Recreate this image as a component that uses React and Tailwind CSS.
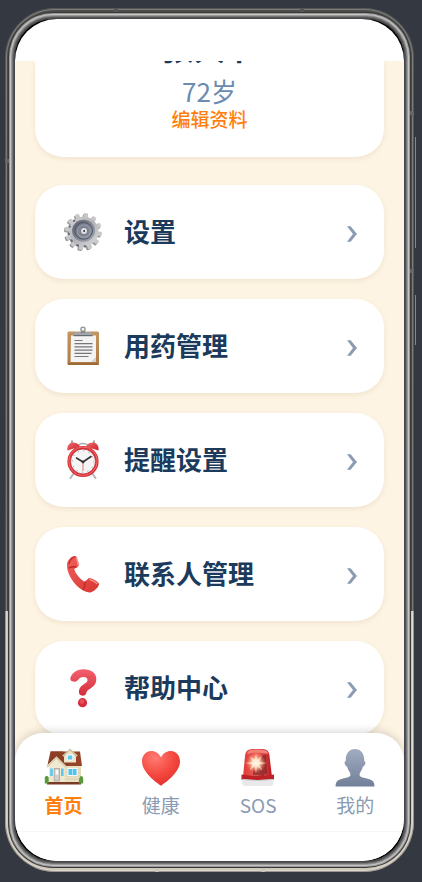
function GearIcon() {
  const teeth = Array.from({ length: 12 }, (_, i) => i * 30 + 8);
  return (
    <svg viewBox="0 0 40 40" className="size-10" aria-hidden="true">
      <defs>
        <linearGradient id="gearRim" x1="0" y1="0" x2="1" y2="1">
          <stop offset="0" stopColor="#d2d2d4" />
          <stop offset="0.5" stopColor="#b4b4b8" />
          <stop offset="1" stopColor="#dcdcde" />
        </linearGradient>
        <linearGradient id="gearCore" x1="0" y1="0" x2="1" y2="1">
          <stop offset="0" stopColor="#5c6270" />
          <stop offset="1" stopColor="#a4a9b6" />
        </linearGradient>
      </defs>
      <g transform="translate(-0.6 0.6)">
        {teeth.map((a) => (
          <rect key={a} x="18" y="1.6" width="4.6" height="8" rx="1" fill="#96969d" transform={`rotate(${a} 20 20)`} />
        ))}
        <circle cx="20" cy="20" r="14.6" fill="#85858d" />
      </g>
      <g fill="url(#gearRim)">
        {teeth.map((a) => (
          <rect key={a} x="18.4" y="1" width="4.4" height="7" rx="1.1" fill="#c8c8cb" transform={`rotate(${a} 20.5 19.5)`} />
        ))}
        <circle cx="20.7" cy="19.6" r="14.8" />
      </g>
      {teeth.slice(5, 11).map((a) => (
        <circle key={a} cx="20" cy="5.6" r="1.2" fill="#696b74" transform={`rotate(${a + 14} 20 20)`} />
      ))}
      <ellipse cx="20.600" cy="18.800" rx="11.500" ry="11" fill="url(#gearCore)" />
      <ellipse cx="20.600" cy="18.800" rx="8.800" ry="8.400" fill="none" stroke="#4b5160" strokeWidth="1" />
      <ellipse cx="20.800" cy="19" rx="6.400" ry="6.200" fill="#7f8593" stroke="#a8adb9" strokeWidth="0.6" />
      <circle cx="21" cy="19" r="3.6" fill="#e0e0e2" stroke="#596070" strokeWidth="0.7" />
      <circle cx="21.1" cy="19" r="1" fill="#30343c" />
    </svg>
  );
}

function ClipboardIcon() {
  return (
    <svg viewBox="0 0 40 40" className="size-10" aria-hidden="true">
      <defs>
        <linearGradient id="board" x1="0" y1="0" x2="0" y2="1">
          <stop offset="0" stopColor="#c4955f" />
          <stop offset="1" stopColor="#b07a42" />
        </linearGradient>
      </defs>
      <rect x="4.5" y="5.5" width="31.5" height="33.5" rx="1.5" fill="url(#board)" />
      <path d="M4.8 38h31" stroke="#916030" strokeWidth="1.2" />
      <path d="M8 9.5h25v26.500H7.500z" fill="#f3f3f4" />
      <path d="M28 36l5-5v5z" fill="#d2d2d5" />
      <path d="M11.500 14.500h8M11.500 17.700h18M11.500 20.900h18M11.500 24.100h18M11.500 27.300h17M11.500 30.500h14" stroke="#77777b" strokeWidth="1.200" />
      <path d="M10.500 8.500l1.500-2.500h16l1.500 2.500v1.200h-19z" fill="#a3a5aa" />
      <path d="M10.500 9.700h19" stroke="#5b5d62" strokeWidth="1" />
      <path d="M17.500 7l1-3h3l1 3z" fill="#85878d" />
      <circle cx="20" cy="3.300" r="2.100" fill="#f3f3f3" stroke="#8d9095" strokeWidth="1.300" />
    </svg>
  );
}

function AlarmIcon() {
  return (
    <svg viewBox="0 0 40 40" className="size-10" aria-hidden="true">
      <defs>
        <linearGradient id="bell" x1="0" y1="0" x2="1" y2="1">
          <stop offset="0" stopColor="#f26a6d" />
          <stop offset="1" stopColor="#c92129" />
        </linearGradient>
      </defs>
      <path d="M11 33l-3.500 5M29 33l3.500 5" stroke="#b4b5b8" strokeWidth="2" strokeLinecap="round" />
      <path d="M9 3.500V1.200M31 3.500V1.200M12 8l4 4M28 8l-4 4" stroke="#a5a6a8" strokeWidth="2" strokeLinecap="round" />
      <path d="M15 5q5-3 10 0" fill="none" stroke="#aaa" strokeWidth="1.400" />
      <path d="M4.500 10.500C3.500 5 8 1 13 3c2 .8 3.300 2 4 3.500z" fill="url(#bell)" />
      <path d="M35.500 10.500C36.500 5 32 1 27 3c-2 .8-3.300 2-4 3.500z" fill="url(#bell)" />
      <circle cx="20" cy="21.500" r="15.600" fill="#d93036" />
      <circle cx="20" cy="21.200" r="14.200" fill="none" stroke="#f07175" strokeWidth="0.900" />
      <circle cx="20" cy="21.500" r="12.500" fill="#f5f5f5" stroke="#b92028" strokeWidth="0.700" />
      <circle cx="20" cy="21.500" r="10.700" fill="none" stroke="#777" strokeWidth="1" strokeDasharray="0.8 4.800" />
      <path d="M20 22v9" stroke="#e36a5e" strokeWidth="0.900" />
      <path d="M13.500 18l6.500 4 8-5.500" fill="none" stroke="#343434" strokeWidth="1.600" strokeLinecap="round" />
      <circle cx="20" cy="22" r="1.400" fill="#343434" />
    </svg>
  );
}

function PhoneIcon() {
  return (
    <svg viewBox="0 0 40 40" className="size-10" aria-hidden="true">
      <defs>
        <linearGradient id="handset" x1="0" y1="0" x2="1" y2="1">
          <stop offset="0" stopColor="#f0605c" />
          <stop offset="1" stopColor="#d8342f" />
        </linearGradient>
      </defs>
      <path d="M6 5.500C8 2.500 11 1.500 13 2.200c1.200 1.200 2.800 6.500 2.800 9.300-.4 1.700-3.600 2.300-4.600 3.600 1.600 5.200 5.200 9.500 9.800 12.400 2 .3 3.400-3 5.200-3.500 2.800 0 8.300 3.400 9.800 5.600.6 2.600-4.800 8.700-9.500 9C14 37 3 20 4 10c.3-1.800.9-3.300 2-4.500z" fill="url(#handset)" />
      <path d="M6 9.500c.5-2.500 2-5 5.500-6.500M13 13c-2.500-.5-5-.2-7 1M22 28.500c.3 2.500-.3 4.800-1.800 6.800" fill="none" stroke="#bd2825" strokeWidth="1.300" strokeLinecap="round" />
      <path d="M13.500 4.500c.9 2 1.400 4 1.300 6.300M27 25.500c2.500.8 5 2.300 7 4" fill="none" stroke="#fb928d" strokeWidth="1.400" strokeLinecap="round" />
    </svg>
  );
}

function QuestionIcon() {
  return (
    <svg viewBox="0 0 40 40" className="size-10" aria-hidden="true">
      <defs>
        <linearGradient id="mark" x1="0" y1="0" x2="0" y2="1">
          <stop offset="0" stopColor="#f4606d" />
          <stop offset="1" stopColor="#d42e3c" />
        </linearGradient>
      </defs>
      <path d="M7.500 9.500C9.500 4.500 14 1.300 20.500 1.300c7.500 0 12.800 3.700 12.800 9.600 0 5.600-3.700 8.200-7 10.300-2.400 1.500-2.700 2.500-3.200 4.300-.5 1.600-1.800 2.200-3.500 2.200-2.300 0-3.700-1.300-3.700-3.600 0-4 2.300-6.300 5.300-8.200 2-1.300 3.300-2.200 3.300-4 0-1.900-1.600-3-4-3-2.800 0-4.100 1.300-5.300 2.900-1.100 1.400-2.200 2-4 1.900-2.800-.1-4.600-2-3.700-4.200z" fill="url(#mark)" />
      <circle cx="19.500" cy="34.700" r="4.600" fill="#d52f3d" />
      <circle cx="19" cy="33.500" r="2.400" fill="#e5505b" />
    </svg>
  );
}

function HouseIcon() {
  return (
    <svg viewBox="0 0 40 40" className="size-10" aria-hidden="true">
      <path d="M5 18h32v18H5z" fill="#e9e0c2" />
      <path d="M6.500 4.500H36L38 19H18z" fill="#94452a" />
      <path d="M6.500 4.500L3.500 18 12.500 10l9.500 9h4L19 4.500z" fill="#8c3f25" />
      <path d="M20 9l6-6 6 6v6.500H20z" fill="#ece3c8" />
      <path d="M18.800 9.200L26 2.500l7.200 6.700" fill="none" stroke="#cfc6a8" strokeWidth="1.600" />
      <rect x="23.200" y="8" width="5.600" height="5" fill="#5cc8ef" stroke="#fff" strokeWidth="0.900" />
      <path d="M5 19l7.500-7.500L20.500 19v17H5z" fill="#f0e8cf" />
      <path d="M3 20l9.500-9.500L22 20" fill="none" stroke="#d8cfb3" strokeWidth="1.800" />
      <path d="M22 23h15M22 26h15M22 29h15M22 32h15" stroke="#cfc5a6" strokeWidth="0.600" />
      <rect x="6.200" y="21.500" width="2.600" height="7.500" fill="#5cc8ef" />
      <rect x="17" y="21.500" width="2.600" height="7.500" fill="#5cc8ef" />
      <rect x="10.200" y="21.500" width="5.400" height="12.500" fill="#d3d0cc" stroke="#a39d94" strokeWidth="0.700" />
      <rect x="11.600" y="23" width="2.600" height="4.500" fill="#fafaf8" />
      <rect x="24" y="21.500" width="9" height="7" fill="#4fc2ee" stroke="#fff" strokeWidth="0.900" />
      <path d="M28.500 21.500v7" stroke="#c5edf9" strokeWidth="0.800" />
      <path d="M3 35h34v2.500H3z" fill="#7a3b25" />
      <path d="M.8 36.500v-6q1.900-3.500 3.900 0v6z" fill="#579b3b" />
      <path d="M35 36.500q-.5-5 1.200-7 2-1.500 3 1.500v5.500z" fill="#579b3b" />
    </svg>
  );
}

function HeartIcon() {
  return (
    <svg viewBox="0 0 40 40" className="size-10" aria-hidden="true">
      <defs>
        <radialGradient id="heart" cx="0.35" cy="0.2" r="0.9">
          <stop offset="0" stopColor="#ff7b72" />
          <stop offset="0.55" stopColor="#f4473f" />
          <stop offset="1" stopColor="#dd2f2b" />
        </radialGradient>
      </defs>
      <path d="M20 38.700C14.500 35 1 25 1 14.500 1 8.500 5 4 10.200 4c4.300 0 7.800 2.400 9.800 6.300C22 6.400 25.500 4 29.800 4 35 4 39 8.500 39 14.500c0 10.500-13.500 20.500-19 24.200z" fill="url(#heart)" />
    </svg>
  );
}

function SirenIcon() {
  return (
    <svg viewBox="0 0 40 40" className="size-10" aria-hidden="true">
      <defs>
        <linearGradient id="dome" x1="0" y1="0" x2="1" y2="0">
          <stop offset="0" stopColor="#dc3b39" />
          <stop offset="0.5" stopColor="#ef6259" />
          <stop offset="1" stopColor="#b9171d" />
        </linearGradient>
        <radialGradient id="flare">
          <stop offset="0" stopColor="#fff" />
          <stop offset="0.4" stopColor="#ffe0ba" stopOpacity="0.900" />
          <stop offset="1" stopColor="#ff8466" stopOpacity="0" />
        </radialGradient>
      </defs>
      <path d="M5 30L7 9Q7.500 2 14 2h11q6 0 6.500 7L34 30z" fill="url(#dome)" />
      <path d="M14 3h11.500q4 .2 4.700 4-10.700-3-21 0Q10 3.200 14 3z" fill="#f08279" />
      <path d="M15 28V20l10-12h3l1 19h-3v2z" fill="#80272a" opacity="0.700" />
      <circle cx="18" cy="16" r="10" fill="url(#flare)" />
      <path d="M18 6l1 7.500 5-4.500-3.200 6 8.200 1-8.200 1.500 3.700 6-5.500-4.500-1 7.500-1.200-7.500-5.300 4.500 3.500-6-8-1.500 8-1-3.500-6 5.300 4.500z" fill="#fff3dc" opacity="0.700" />
      <path d="M3.500 27.500q16 3 32.500 0V33H3.500z" fill="#bd2227" />
      <path d="M4 32q16 2 31.500 0v5q-1 2-3.500 2H7.500Q5 39 4 37z" fill="#e8e9eb" />
      <path d="M4 32.500q16 2 31.500 0" fill="none" stroke="#c6c8cc" strokeWidth="0.900" />
    </svg>
  );
}

function PersonIcon() {
  return (
    <svg viewBox="0 0 40 40" className="size-10" aria-hidden="true">
      <defs>
        <linearGradient id="person" x1="0" y1="0" x2="0" y2="1">
          <stop offset="0" stopColor="#a1acbf" />
          <stop offset="1" stopColor="#717f98" />
        </linearGradient>
      </defs>
      <path transform="translate(-0.500 1)" d="M1 38.500c0-4 1.500-6.300 5-7.300 5-1.400 9-1.800 9.800-3.700.4-1.500-.3-3-1.500-4.800-.8-1.100-1.300-2.700-1.700-4.200-1.300-.2-2.700-2.200-2.500-4.200.1-.8.700-1.200 1.200-1.300C10.800 6 14.500 1 20.500 1s9.700 5 9.200 12c.5.100 1.100.5 1.200 1.300.2 2-1.200 4-2.500 4.200-.4 1.500-.9 3.100-1.700 4.200-1.200 1.800-1.900 3.300-1.500 4.800.8 1.900 4.800 2.300 9.800 3.700 3.500 1 5 3.300 5 7.300z" fill="url(#person)" />
    </svg>
  );
}

const menu = [
  { label: '设置', Icon: GearIcon },
  { label: '用药管理', Icon: ClipboardIcon },
  { label: '提醒设置', Icon: AlarmIcon },
  { label: '联系人管理', Icon: PhoneIcon },
  { label: '帮助中心', Icon: QuestionIcon },
];

const tabs = [
  { label: '首页', Icon: HouseIcon, active: true },
  { label: '健康', Icon: HeartIcon },
  { label: 'SOS', Icon: SirenIcon },
  { label: '我的', Icon: PersonIcon },
];

function Profile() {
  return (
    <section className="flex h-24 shrink-0 flex-col items-center justify-end rounded-b-[28px] bg-white pb-6 shadow-[0_2px_5px_rgba(120,90,40,0.1)]">
      <h1 className="mb-[11px] text-[32px] leading-10 font-bold text-[#1b3a5c]">张大爷</h1>
      <p className="text-[26px] leading-7 text-[#6b8bb0]">72岁</p>
      <a href="#edit" className="text-[19px] leading-7 font-medium text-[#ff7f0e]">编辑资料</a>
    </section>
  );
}

function MenuItem({ label, Icon }) {
  return (
    <li>
      <button type="button" className="flex h-[94px] w-full items-center gap-[21px] rounded-[28px] bg-white pr-[27px] pl-7 text-left shadow-[0_2px_5px_rgba(120,90,40,0.1)]">
        <Icon />
        <span className="flex-1 pb-0.5 text-[26px] leading-9 font-bold text-[#1b3a5c]">{label}</span>
        <svg viewBox="0 0 10 16" className="mt-1 h-4 w-2.5" fill="#8a9bb2" aria-hidden="true">
          <path d="M0 .3h3.600L10 8l-6.400 7.700H0L6 8z" />
        </svg>
      </button>
    </li>
  );
}

function TabBar() {
  return (
    <nav className="relative -mt-7 rounded-t-[28px] bg-white shadow-[0_-2px_8px_rgba(0,0,0,0.15)]">
      <ul className="grid grid-cols-4 pt-3.5 pb-3">
        {tabs.map(({ label, Icon, active }) => (
          <li key={label}>
            <button type="button" className="flex w-full flex-col items-center gap-1">
              <Icon />
              <span className={active ? 'text-[19px] leading-7 font-bold text-[#ff7f0e]' : 'text-[19px] leading-7 text-[#8a9bb2]'}>{label}</span>
            </button>
          </li>
        ))}
      </ul>
      <div className="h-[30px] border-t border-[#f7f7f7]" />
    </nav>
  );
}

export default function App() {
  return (
    <div className="flex h-screen bg-[#343841] pt-2 pr-2 pb-2.5 pl-[5px] font-['Noto_Sans_CJK_SC',sans-serif]">
      <div className="relative flex flex-1 rounded-[50px] bg-[linear-gradient(to_bottom,#4b4b4a_0%,#454443_69.8%,#cfc8ba_69.8%,#cfc8ba_100%)] px-2.5 py-[11px] shadow-[inset_0_0_0_1px_rgba(0,0,0,0.3),inset_0_0_0_2px_rgba(255,255,255,0.28)]">
        <i className="absolute top-[129px] -right-0.5 h-[111px] w-px bg-[#85878b]" />
        <i className="absolute top-[287px] -right-0.5 h-[50px] w-px bg-[#85878b]" />
        <i className="absolute top-0 left-[109px] h-1 w-1 bg-[#555]" />
        <i className="absolute top-0 right-[110px] h-1 w-1 bg-[#555]" />
        <i className="absolute bottom-0 left-[150px] h-1 w-1 bg-[#cbc5b9]" />
        <i className="absolute right-[149px] bottom-0 h-1 w-1 bg-[#cbc5b9]" />
        <i className="absolute top-[151px] left-0 h-1 w-1 bg-[#666]" />
        <i className="absolute top-[103px] right-0 h-1 w-1 bg-[#666]" />
        <i className="absolute top-[261px] right-0 h-1 w-1 bg-[#666]" />
        <div className="flex flex-1 rounded-[38px] bg-black shadow-[0_0_0_1px_#43464c,0_0_0_2px_#555,0_0_0_3px_#757575,0_0_0_4px_#999,0_0_0_5px_#c4c4c4,0_0_0_6px_#999,0_0_0_7px_#3a3a3a]">
          <div className="flex min-w-0 flex-1 flex-col overflow-hidden rounded-[42px] bg-white">
            <header className="h-[42px] shrink-0" />
            <main className="flex min-h-0 flex-1 flex-col gap-7 overflow-hidden bg-[#fef4e3] px-5">
              <Profile />
              <ul className="flex flex-col gap-5">
                {menu.map((item) => (
                  <MenuItem key={item.label} {...item} />
                ))}
              </ul>
            </main>
            <TabBar />
          </div>
        </div>
      </div>
    </div>
  );
}
